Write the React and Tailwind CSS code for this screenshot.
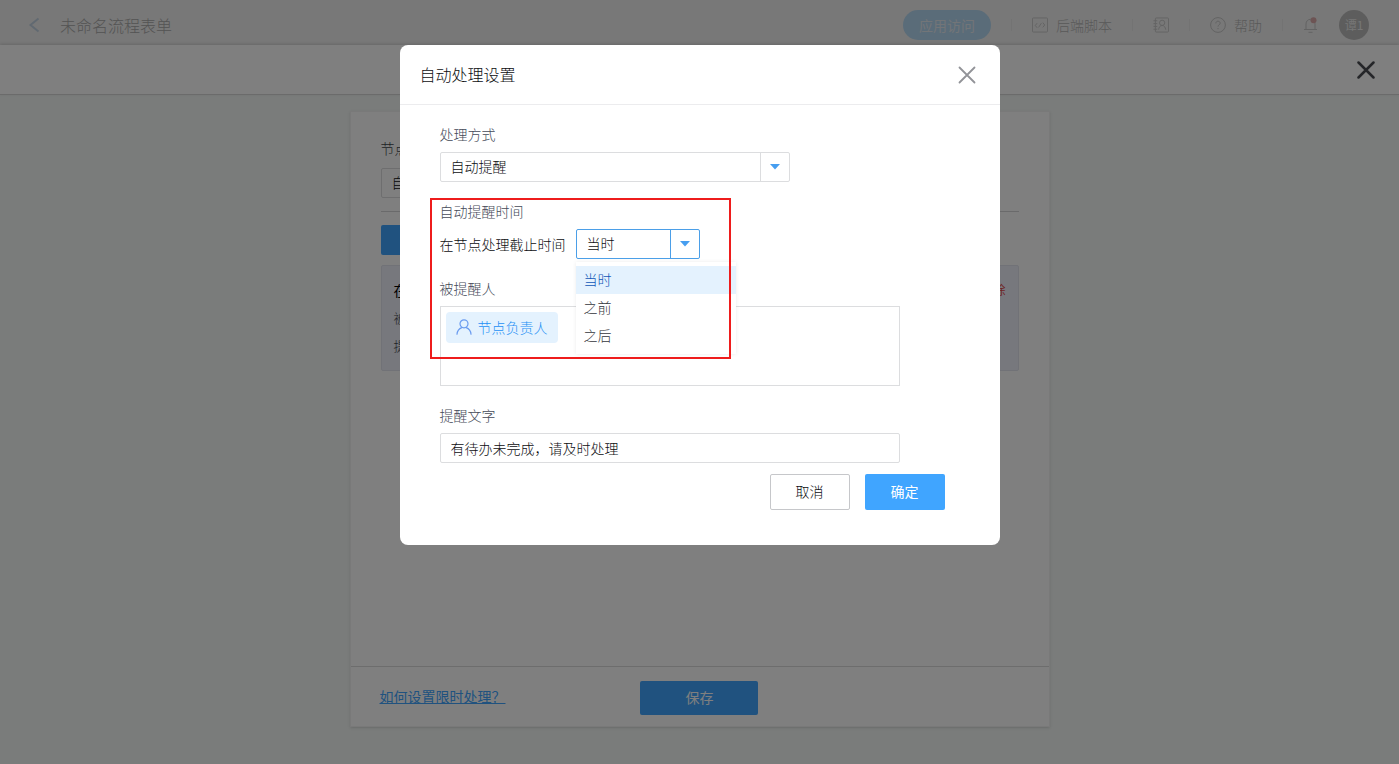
import React, { useState } from 'react';

const CloseIcon = ({ className, strokeWidth }) => (
    <svg className={className} viewBox="0 0 18 18" fill="none" stroke="currentColor" strokeWidth={strokeWidth} strokeLinecap="round">
        <path d="M1.5 1.5l15 15M16.5 1.5l-15 15" />
    </svg>
);

const Divider = () => <span className="w-px h-3 bg-[#e6e6e6]"></span>;

/**
 * Select box with a separate arrow cell
 */
const SelectBox = ({ id, label, value, options, onChange, active, className }) => (
    <div className={`flex h-[30px] rounded-xs border bg-white ${active ? 'border-[#4b9fe8]' : 'border-[#dcdddf]'} ${className}`}>
        <select
            id={id}
            aria-label={label}
            value={value}
            onChange={(e) => onChange(e.target.value)}
            className="flex-1 min-w-0 appearance-none bg-transparent px-[10px] pb-[2px] text-sm text-[#0c0d10] outline-none"
        >
            {options.map((option) => (
                <option key={option}>{option}</option>
            ))}
        </select>
        <span className={`flex w-[29px] items-center justify-center border-l ${active ? 'border-[#4b9fe8]' : 'border-[#dcdddf]'}`}>
            <svg className="w-[10px] h-[6px] text-[#469ef0]" viewBox="0 0 10 6" fill="currentColor">
                <path d="M0 0h10L5 5.6z" />
            </svg>
        </span>
    </div>
);

const TopBar = () => (
    <header className="flex items-center justify-between bg-[#f0f0f0] pt-[10px] pb-[5px] pl-7 pr-[30px] text-sm text-[#b4b4b4]">
        <div className="flex items-center gap-5">
            <button type="button" aria-label="返回" className="text-[#c3d3e2]">
                <svg className="w-3 h-4" viewBox="0 0 12 16" fill="none" stroke="currentColor" strokeWidth="2">
                    <path d="M10.500 1.5L2.500 8l8 6.500" />
                </svg>
            </button>
            <h1 className="text-base text-[#a8a8a8]">未命名流程表单</h1>
        </div>

        <div className="flex items-center gap-5">
            <button type="button" className="h-[30px] rounded-full bg-[#b4d8f2] px-4 font-normal text-[#e4eaf0]">应用访问</button>
            <Divider />
            <a href="#script" className="flex items-center gap-2">
                <svg className="w-4 h-4" viewBox="0 0 17 17" fill="none" stroke="#c6c6c6">
                    <rect x="0.5" y="1" width="16" height="15" rx="1" />
                    <path d="M5.500 6.500L3.500 9l2 2.500M11.500 6l2 2.500-2 2.500M10 6.500l-3 4.500" />
                </svg>
                <span>后端脚本</span>
            </a>
            <Divider />
            <button type="button" aria-label="通讯录">
                <svg className="w-4 h-4" viewBox="0 0 17 17" fill="none" stroke="#c6c6c6">
                    <rect x="2.5" y="1" width="14" height="15" rx="1" />
                    <path d="M0.5 4h4M0.5 7h4M0.5 10h4M0.5 13h4M6 13.500c.2-2.500 1.500-4.500 3.700-4.500s3.600 2 3.800 4.500" />
                    <circle cx="9.700" cy="6.200" r="2.800" />
                </svg>
            </button>
            <Divider />
            <a href="#help" className="flex items-center gap-2">
                <svg className="w-4 h-4" viewBox="0 0 16 16" fill="none" stroke="#c6c6c6">
                    <circle cx="8" cy="8" r="7.400" />
                    <path d="M5.800 6.400c0-1.300 1-2.200 2.200-2.200s2.200.8 2.200 2c0 1.600-2.200 1.600-2.200 3.400M8 11v1.200" />
                </svg>
                <span>帮助</span>
            </a>
            <Divider />
            <button type="button" aria-label="通知">
                <svg className="w-4 h-4" viewBox="0 0 16 16" fill="none" stroke="#c6c6c6">
                    <path d="M1 12.500h13M3 12.500V7c0-2.700 1.800-4.700 4.500-4.700S12 4.300 12 7v5.500M5.500 15.300h4" />
                    <circle cx="10.500" cy="3.200" r="3" fill="#dba8a8" stroke="none" />
                </svg>
            </button>
            <span className="flex h-[30px] w-[30px] items-center justify-center rounded-full bg-[#bababa] text-xs font-normal text-[#ececec]">谭1</span>
        </div>
    </header>
);

const NodePanel = () => (
    <main className="flex flex-1 justify-center px-4 pt-4 pb-[37px]">
        <section className="flex w-full max-w-[700px] flex-col border border-[#f2f2f2] bg-white shadow-sm">
            <div className="flex-1 px-[30px] pt-[26px] text-sm">
                <label htmlFor="node-time" className="block leading-5 text-[#40434a]">节点</label>
                <SelectBox id="node-time" value="自定义" options={['自定义']} onChange={() => {}} className="mt-[10px] w-[350px]" />
                <hr className="mt-[13px] border-[#d4d4d6]" />
                <button type="button" className="mt-[13px] h-[30px] w-[118px] rounded-xs bg-[#40a5ff] text-white">添加</button>
                <div className="mt-[10px] rounded-xs border border-[#e2e5ee] bg-[#eff1fa] px-3 pt-[14px] pb-[14px]">
                    <div className="flex justify-between leading-5">
                        <strong className="text-black">在截止时间</strong>
                        <button type="button" className="text-xs font-normal text-[#e04848]">删除</button>
                    </div>
                    <p className="mt-2 text-[13px] leading-5 text-[#40434a]">被提醒人</p>
                    <p className="mt-2 text-[13px] leading-5 text-[#40434a]">提醒文字</p>
                </div>
            </div>
            <footer className="grid h-[60px] grid-cols-3 items-center border-t border-[#dadada] px-[29px] pt-[2px] text-sm">
                <a href="#how" className="pb-[3px] font-normal text-[#40a5ff] underline">如何设置限时处理？</a>
                <button type="button" className="h-[34px] w-[118px] justify-self-center rounded-xs bg-[#40a5ff] pb-[2px] font-normal text-white">保存</button>
            </footer>
        </section>
    </main>
);

const timings = ['当时', '之前', '之后'];

const AutoHandleDialog = () => {
    const [mode, setMode] = useState('自动提醒');
    const [timing, setTiming] = useState('当时');
    const [text, setText] = useState('有待办未完成，请及时处理');

    return (
        <div role="dialog" aria-labelledby="dialog-title" className="relative w-full max-w-[600px] rounded-lg bg-white text-sm text-[#0c0d10]">
            <div className="flex h-[60px] items-center justify-between border-b border-[#ececee] pl-5 pr-6">
                <h2 id="dialog-title" className="pb-[2px] text-base">自动处理设置</h2>
                <button type="button" aria-label="关闭" className="text-[#929398]">
                    <CloseIcon className="w-[18px] h-[18px]" strokeWidth="1.800" />
                </button>
            </div>

            <form className="flex flex-col gap-[19px] px-10 pt-[19px] pb-[35px]" onSubmit={(e) => e.preventDefault()}>
                <div className="flex flex-col gap-2">
                    <label htmlFor="mode" className="leading-5 text-[#454a58]">处理方式</label>
                    <SelectBox id="mode" value={mode} options={['自动提醒']} onChange={setMode} className="w-[350px]" />
                </div>

                <div className="flex flex-col gap-2">
                    <label htmlFor="timing" className="leading-5 text-[#454a58]">自动提醒时间</label>
                    <div className="flex items-center gap-[10px]">
                        <span>在节点处理截止时间</span>
                        <div className="relative">
                            <SelectBox id="timing" value={timing} options={timings} onChange={setTiming} active className="w-[124px]" />
                            {/* Open option list */}
                            <ul role="listbox" aria-label="提醒时间" className="absolute top-full left-0 z-10 mt-[3px] w-[160px] bg-white py-1 shadow-[0_0_4px_rgba(0,0,0,0.08)]">
                                {timings.map((item) => (
                                    <li
                                        key={item}
                                        role="option"
                                        aria-selected={item === timing}
                                        onClick={() => setTiming(item)}
                                        className={`cursor-pointer px-2 pb-[2px] leading-[26px] ${item === timing ? 'bg-[#e4f2fe] text-[#0f56b8]' : 'text-[#33363d]'}`}
                                    >
                                        {item}
                                    </li>
                                ))}
                            </ul>
                        </div>
                    </div>
                </div>

                <div className="flex flex-col gap-2">
                    <span className="leading-5 text-[#454a58]">被提醒人</span>
                    <div className="h-20 w-full max-w-[460px] border border-[#dcdddf] p-[5px]">
                        <span className="inline-flex h-[31px] items-center gap-[6px] rounded-sm bg-[#e4f2fe] px-[10px] pb-[2px] text-[#2490f5]">
                            <svg className="w-4 h-4" viewBox="0 0 16 16" fill="none" stroke="#6b9cf0" strokeWidth="1.200" strokeLinecap="round">
                                <circle cx="8" cy="4.800" r="4" />
                                <path d="M1 15.200c.3-3.600 2-5.600 4.800-6.600M15 15.200c-.3-3.600-2-5.600-4.800-6.600" />
                            </svg>
                            节点负责人
                        </span>
                    </div>
                </div>

                <div className="flex flex-col gap-2">
                    <label htmlFor="remind-text" className="leading-5 text-[#454a58]">提醒文字</label>
                    <input
                        id="remind-text"
                        type="text"
                        value={text}
                        onChange={(e) => setText(e.target.value)}
                        className="h-[30px] w-full max-w-[460px] rounded-xs border border-[#dcdddf] px-[10px] outline-none"
                    />
                    <div className="mt-[3px] flex justify-end gap-[15px] pr-[15px]">
                        <button type="button" className="h-9 w-20 rounded-xs border border-[#c6c7ca] pb-[2px]">取消</button>
                        <button type="submit" className="h-9 w-20 rounded-xs bg-[#40a5ff] pb-[2px] font-normal text-white">确定</button>
                    </div>
                </div>
            </form>

            {/* Highlight frame */}
            <div className="pointer-events-none absolute top-[153px] left-[30px] z-20 h-[161px] w-[301px] border-2 border-[#ee1c1c]"></div>
        </div>
    );
};

const App = () => {
    return (
        <div className="flex min-h-screen flex-col bg-[#f4f8f6] font-['Noto_Sans_CJK_SC',sans-serif] font-light">
            <TopBar />
            <div className="relative flex h-[50px] items-center justify-end border-b border-[#d6d6d6] bg-white pr-6 shadow-[0_-1px_3px_rgba(0,0,0,0.15)]">
                <button type="button" aria-label="关闭页面" className="text-[#4a4c52]">
                    <CloseIcon className="w-[18px] h-[18px]" strokeWidth="2.500" />
                </button>
            </div>
            <NodePanel />

            {/* Mask and dialog */}
            <div className="fixed inset-0 flex items-start justify-center bg-black/50 pt-[45px]">
                <AutoHandleDialog />
            </div>
        </div>
    );
};

export default App;
